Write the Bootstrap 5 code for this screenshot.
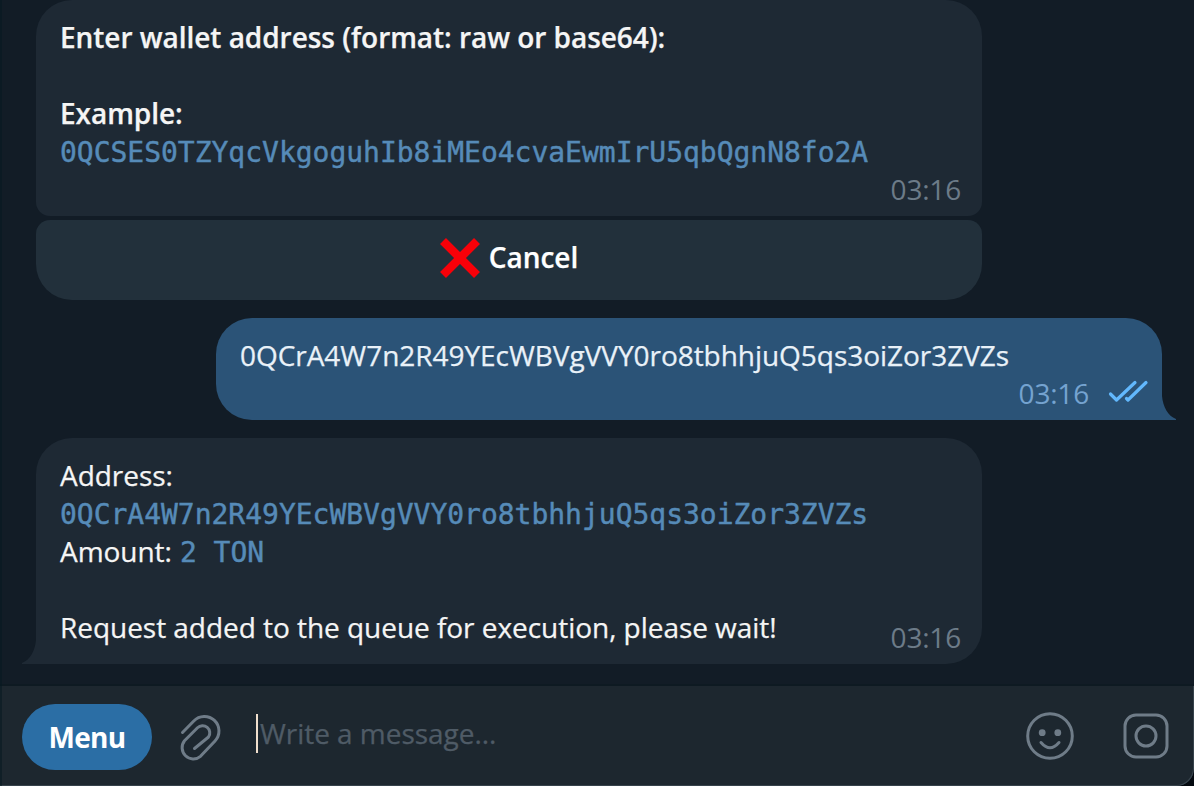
<!DOCTYPE html>
<html lang="en">
<head>
<meta charset="utf-8">
<meta name="viewport" content="width=device-width, initial-scale=1">
<title>Chat</title>
<link href="https://cdn.jsdelivr.net/npm/bootstrap@5.3.0/dist/css/bootstrap.min.css" rel="stylesheet">
<style>
  body { font: 400 28px/38px "Open Sans", "Noto Sans", sans-serif; letter-spacing: -.04px; color: #f5f5f5; background: #04090f; -webkit-text-stroke: .25px; }
  .chat-window { background: #121c26; border-bottom-right-radius: 17px; }
  .window-edge { width: 2px; background: rgba(4, 24, 32, .5); z-index: 3; }
  .bubble { width: 946px; background: #1e2934; border-radius: 36px; padding: 18px 21px 8px 24px; }
  .bubble-in { margin-left: 36px; }
  .bubble-prompt { height: 216px; border-radius: 36px 36px 14px 14px; }
  .bubble-out { height: 102px; margin: 18px 32px 18px auto; background: #2b5377; color: #e9f1f8; border-bottom-right-radius: 0; }
  .bubble-result { height: 226px; border-bottom-left-radius: 0; }
  .inline-key { width: 946px; height: 80px; margin-top: 4px; background: #22303b; border: 0; border-radius: 14px 14px 36px 36px; color: #fff; padding: 0 0 4px; font-weight: 600; gap: 9px; }
  .inline-key span { padding-bottom: 2px; }
  .semi { font-weight: 600; }
  .mono { font-family: "DejaVu Sans Mono", monospace; height: 38px; padding-top: 2px; letter-spacing: -.02px; color: #568bb8; -webkit-text-stroke: .45px #568bb8; }
  .stamp { color: #6c7b88; letter-spacing: -.2px; -webkit-text-stroke: 0; }
  .bubble-out .stamp { color: #75a3d0; }
  .out-meta { margin-right: -8px; }
  .tail { bottom: 0; width: 15px; height: 24px; }
  .tail-out { left: 100%; margin-left: -1px; }
  .tail-in { right: 100%; margin-right: -1px; }
  .amount-line { height: 38px; display: flex; gap: 8px; }
  .composer { height: 102px; background: #1d272f; border-top: 2px solid #0e1a22; border-bottom-right-radius: 17px; box-shadow: inset -1px -1px 0 #36424b; padding: 0 24px 0 22px; }
  .menu-btn { width: 130px; height: 66px; margin-top: 2px; background: #2b6ea5; color: #fff; font-size: 28px; font-weight: 700; line-height: 38px; letter-spacing: -.7px; -webkit-text-stroke: 0; }
  .clip { margin: 2px 0 0 25px; }
  .message-field { color: #4f5b66; margin: 0 0 5px 33px; }
  .message-field .hint { margin-left: 2px; padding-bottom: 1px; }
  .caret { width: 2px; height: 39px; background: #f0dfcd; }
  .ico { fill: none; stroke: #6f7c88; stroke-width: 3; stroke-linecap: round; stroke-linejoin: round; }
  .camera { margin-left: 48px; }
</style>
</head>
<body class="overflow-hidden">
<div class="chat-window vh-100 d-flex flex-column position-relative overflow-hidden">
  <div class="window-edge position-absolute top-0 bottom-0 start-0"></div>

  <main class="flex-grow-1">
    <div class="bubble bubble-in bubble-prompt d-flex flex-column text-nowrap">
      <span class="semi">Enter wallet address (format: raw or base64):</span>
      <br>
      <span class="semi">Example:</span>
      <span class="mono">0QCSES0TZYqcVkgoguhIb8iMEo4cvaEwmIrU5qbQgnN8fo2A</span>
      <span class="stamp align-self-end">03:16</span>
    </div>
    <button type="button" class="inline-key bubble-in d-flex align-items-center justify-content-center">
      <svg width="40" height="40" viewBox="0 0 40 40"><path d="M3 3 37 37M37 3 3 37" stroke="#f80008" stroke-width="8.4"/></svg>
      <span>Cancel</span>
    </button>

    <div class="bubble bubble-out position-relative d-flex flex-column text-nowrap">
      <span>0QCrA4W7n2R49YEcWBVgVVY0ro8tbhhjuQ5qs3oiZor3ZVZs</span>
      <div class="out-meta d-flex justify-content-end">
        <span class="stamp">03:16</span>
        <svg class="ms-3" width="44" height="38" viewBox="0 0 44 38" fill="none" stroke="#62b8fd" stroke-width="3.2" stroke-linecap="round" stroke-linejoin="round"><path d="M5.500 20 11.500 26 30 8.500M21.500 24.500 23 26 41 8.500"/></svg>
      </div>
      <svg class="tail tail-out position-absolute" viewBox="0 0 15 24"><path d="M0 0H1C2 11 7 20 15 23V24H0Z" fill="#2b5377"/></svg>
    </div>

    <div class="bubble bubble-in bubble-result position-relative d-flex justify-content-between text-nowrap">
      <div class="d-flex flex-column">
        <span>Address:</span>
        <span class="mono">0QCrA4W7n2R49YEcWBVgVVY0ro8tbhhjuQ5qs3oiZor3ZVZs</span>
        <div class="amount-line"><span>Amount:</span><span class="mono">2 TON</span></div>
        <br>
        <span>Request added to the queue for execution, please wait!</span>
      </div>
      <span class="stamp align-self-end">03:16</span>
      <svg class="tail tail-in position-absolute" viewBox="0 0 15 24"><path d="M15 0H14C13 11 8 20 0 23V24H15Z" fill="#1e2934"/></svg>
    </div>
  </main>

  <footer class="composer d-flex align-items-center">
    <button type="button" class="menu-btn btn rounded-pill border-0 p-0">Menu</button>
    <svg class="ico clip" width="46" height="50" viewBox="178 712 46 50"><path d="M183.500 732.500 194.800 721A14.200 14.200 0 0 1 216 741L201.500 756.300A11.200 11.200 0 0 1 185.500 740.800L198.500 727.800A7.200 7.200 0 0 1 209.500 737L195.500 748.500"/></svg>
    <div class="message-field d-flex align-items-center flex-grow-1">
      <span class="caret"></span><span class="hint">Write a message...</span>
    </div>
    <svg class="ico" width="48" height="48" viewBox="0 0 48 48"><circle cx="24" cy="24" r="22.300"/><path d="M15 30.500Q24 41 33 30.500"/><g fill="#6f7c88" stroke="none"><circle cx="16.200" cy="20.700" r="3.400"/><circle cx="31.800" cy="20.700" r="3.400"/></g></svg>
    <svg class="ico camera" width="48" height="48" viewBox="0 0 48 48"><rect x="3" y="3" width="42" height="42" rx="11"/><circle cx="24" cy="24" r="10"/></svg>
  </footer>
</div>
<script src="https://cdn.jsdelivr.net/npm/bootstrap@5.3.0/dist/js/bootstrap.bundle.min.js"></script>
</body>
</html>
